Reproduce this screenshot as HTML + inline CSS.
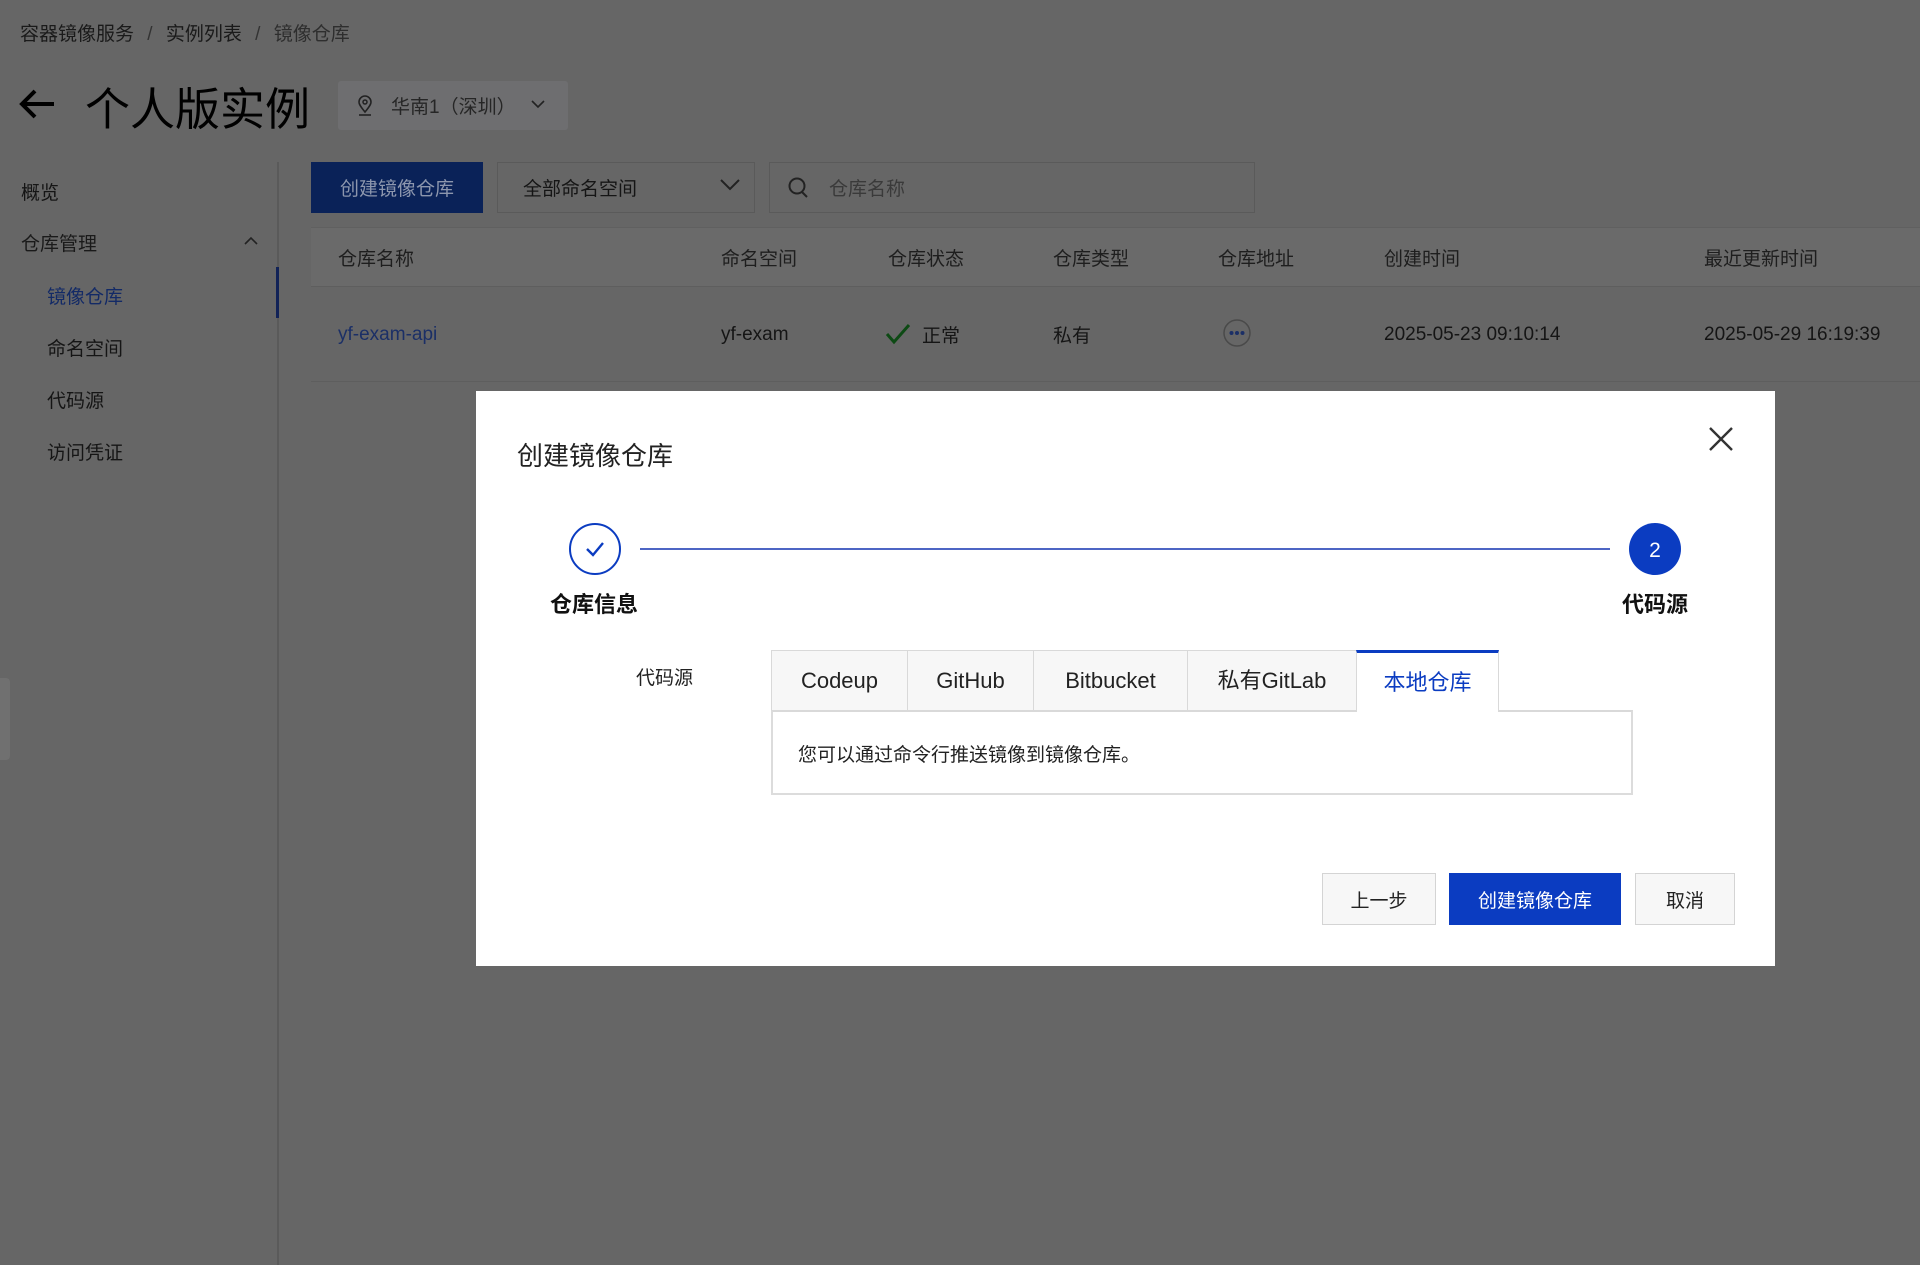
<!DOCTYPE html>
<html><head><meta charset="utf-8"><style>
*{box-sizing:border-box;margin:0;padding:0}
body{width:1920px;height:1265px;background:#666;position:relative;overflow:hidden;font-family:"Liberation Sans","Noto Sans CJK SC",sans-serif;color:#111}
.a{position:absolute;white-space:nowrap}
.dim{color:#1c1c1c}
.tab{position:absolute;top:650px;height:61px;border:1px solid #d9d9d9;border-bottom:none;background:#f7f7f7;font-size:22px;color:#222;display:flex;align-items:center;justify-content:center;line-height:1}
.btn{position:absolute;top:873px;height:52px;display:flex;align-items:center;justify-content:center;font-size:19px;border:1px solid #d4d4d4;background:#f7f7f7;color:#222}
</style></head><body>
<div class="a dim" style="left:20px;top:19px;font-size:19px;color:#1a1a1a">容器镜像服务 <span style="margin:0 8px;color:#333">/</span> 实例列表 <span style="margin:0 8px;color:#333">/</span> <span style="color:#2e2e2e">镜像仓库</span></div>
<svg class="a" style="left:18px;top:86px" width="40" height="36" viewBox="0 0 40 36"><path d="M36 18H4M17 5L4 18l13 13" stroke="#000" stroke-width="4" fill="none"/></svg>
<div class="a" style="left:85px;top:73px;font-size:45px;color:#000">个人版实例</div>
<div class="a" style="left:338px;top:81px;width:230px;height:49px;background:#6e6e70;border-radius:3px"></div>
<svg class="a" style="left:356px;top:95px" width="18" height="22" viewBox="0 0 18 22"><path d="M9 17C4 11 3 9 3 7a6 6 0 0 1 12 0c0 2-1 4-6 10z" stroke="#222" stroke-width="1.6" fill="none"/><circle cx="9" cy="7" r="2" stroke="#222" stroke-width="1.5" fill="none"/><path d="M3 20h12" stroke="#222" stroke-width="1.6"/></svg>
<div class="a" style="left:391px;top:92px;font-size:19px;color:#262626">华南1（深圳）</div>
<svg class="a" style="left:531px;top:99px" width="14" height="10"><path d="M1 2l6 6 6-6" stroke="#222" stroke-width="1.6" fill="none"/></svg>
<div class="a" style="left:21px;top:178px;font-size:19px;color:#151515">概览</div>
<div class="a" style="left:21px;top:229px;font-size:19px;color:#1a1a1a">仓库管理</div>
<svg class="a" style="left:244px;top:236px" width="14" height="10"><path d="M1 8l6-6 6 6" stroke="#222" stroke-width="1.6" fill="none"/></svg>
<div class="a" style="left:47px;top:282px;font-size:19px;color:#132a66">镜像仓库</div>
<div class="a" style="left:47px;top:334px;font-size:19px;color:#151515">命名空间</div>
<div class="a" style="left:47px;top:386px;font-size:19px;color:#151515">代码源</div>
<div class="a" style="left:47px;top:438px;font-size:19px;color:#151515">访问凭证</div>
<div class="a" style="left:277px;top:162px;width:2px;height:1103px;background:#5a5a5a"></div>
<div class="a" style="left:276px;top:267px;width:3px;height:51px;background:#112257"></div>
<div class="a" style="left:0;top:678px;width:10px;height:82px;background:#707070;border-radius:0 4px 4px 0"></div>
<div class="a" style="left:311px;top:162px;width:172px;height:51px;background:#0a2258;color:#8c96ad;font-size:19px;display:flex;align-items:center;justify-content:center">创建镜像仓库</div>
<div class="a" style="left:497px;top:162px;width:258px;height:51px;border:1px solid #5a5a5a;"></div>
<div class="a" style="left:523px;top:174px;font-size:19px;color:#151515">全部命名空间</div>
<svg class="a" style="left:720px;top:178px" width="20" height="14"><path d="M1 2l9 9 9-9" stroke="#222" stroke-width="2" fill="none"/></svg>
<div class="a" style="left:769px;top:162px;width:486px;height:51px;border:1px solid #5a5a5a"></div>
<svg class="a" style="left:787px;top:176px" width="22" height="24"><circle cx="10" cy="10" r="7.5" stroke="#222" stroke-width="2" fill="none"/><path d="M15 16l5 5" stroke="#222" stroke-width="2"/></svg>
<div class="a" style="left:829px;top:174px;font-size:19px;color:#3a3a3a">仓库名称</div>
<div class="a" style="left:311px;top:227px;width:1609px;height:60px;background:#6a6a6a;border-top:1px solid #606060;border-bottom:1px solid #5e5e5e"></div>
<div class="a" style="left:338px;top:244px;font-size:19px;color:#1e1e1e">仓库名称</div>
<div class="a" style="left:721px;top:244px;font-size:19px;color:#1e1e1e">命名空间</div>
<div class="a" style="left:888px;top:244px;font-size:19px;color:#1e1e1e">仓库状态</div>
<div class="a" style="left:1053px;top:244px;font-size:19px;color:#1e1e1e">仓库类型</div>
<div class="a" style="left:1218px;top:244px;font-size:19px;color:#1e1e1e">仓库地址</div>
<div class="a" style="left:1384px;top:244px;font-size:19px;color:#1e1e1e">创建时间</div>
<div class="a" style="left:1704px;top:244px;font-size:19px;color:#1e1e1e">最近更新时间</div>
<div class="a" style="left:338px;top:324px;font-size:19px;color:#1b2f66">yf-exam-api</div>
<div class="a" style="left:721px;top:324px;font-size:19px;color:#151515">yf-exam</div>
<svg class="a" style="left:885px;top:323px" width="26" height="22"><path d="M2 11l7 8L24 2" stroke="#0d4a14" stroke-width="3" fill="none"/></svg>
<div class="a" style="left:922px;top:321px;font-size:19px;color:#151515">正常</div>
<div class="a" style="left:1053px;top:321px;font-size:19px;color:#151515">私有</div>
<svg class="a" style="left:1222px;top:318px" width="30" height="30"><circle cx="15" cy="15" r="13" stroke="#4a4a4a" stroke-width="1.5" fill="none"/><circle cx="9.5" cy="15" r="2" fill="#1b2f66"/><circle cx="15" cy="15" r="2" fill="#1b2f66"/><circle cx="20.5" cy="15" r="2" fill="#1b2f66"/></svg>
<div class="a" style="left:1384px;top:324px;font-size:19px;color:#151515">2025-05-23 09:10:14</div>
<div class="a" style="left:1704px;top:324px;font-size:19px;color:#151515">2025-05-29 16:19:39</div>
<div class="a" style="left:311px;top:381px;width:1609px;height:1px;background:#5e5e5e"></div>

<div class="a" style="left:476px;top:391px;width:1299px;height:575px;background:#fff"></div>
<div class="a" style="left:517px;top:436px;font-size:26px;color:#222">创建镜像仓库</div>
<svg class="a" style="left:1707px;top:425px" width="28" height="28"><path d="M3 3l22 22M25 3L3 25" stroke="#333" stroke-width="2.4"/></svg>
<svg class="a" style="left:566px;top:520px" width="1120" height="60"><circle cx="29" cy="29" r="25" stroke="#0b3cc1" stroke-width="2" fill="#fff"/><path d="M21 29l6 6 10-12" stroke="#0b3cc1" stroke-width="2.4" fill="none"/><path d="M74 29H1044" stroke="#4d65c4" stroke-width="2"/><circle cx="1089" cy="29" r="26" fill="#0b3cc1"/><text x="1089" y="37" font-size="21" fill="#fff" text-anchor="middle" font-family="Liberation Sans">2</text></svg>
<div class="a" style="left:550px;top:587px;font-size:22px;font-weight:bold;color:#111">仓库信息</div>
<div class="a" style="left:1622px;top:587px;font-size:22px;font-weight:bold;color:#111">代码源</div>
<div class="a" style="left:636px;top:663px;font-size:19px;color:#222">代码源</div>
<div class="tab" style="left:771px;width:137px">Codeup</div>
<div class="tab" style="left:907px;width:127px">GitHub</div>
<div class="tab" style="left:1033px;width:155px">Bitbucket</div>
<div class="tab" style="left:1187px;width:170px">私有GitLab</div>
<div class="tab" style="left:1356px;width:143px;background:#fff;border-top:3px solid #0b3cc1;color:#0b3cc1;height:62px;z-index:2">本地仓库</div>
<div class="a" style="left:771px;top:710px;width:862px;height:85px;border:2px solid #dcdcdc;border-top:2px solid #d9d9d9"></div>
<div class="a" style="left:798px;top:740px;font-size:19px;color:#222">您可以通过命令行推送镜像到镜像仓库。</div>
<div class="btn" style="left:1322px;width:114px">上一步</div>
<div class="btn" style="left:1449px;width:172px;background:#0b3cc1;border-color:#0b3cc1;color:#fff">创建镜像仓库</div>
<div class="btn" style="left:1635px;width:100px">取消</div>
</body></html>
